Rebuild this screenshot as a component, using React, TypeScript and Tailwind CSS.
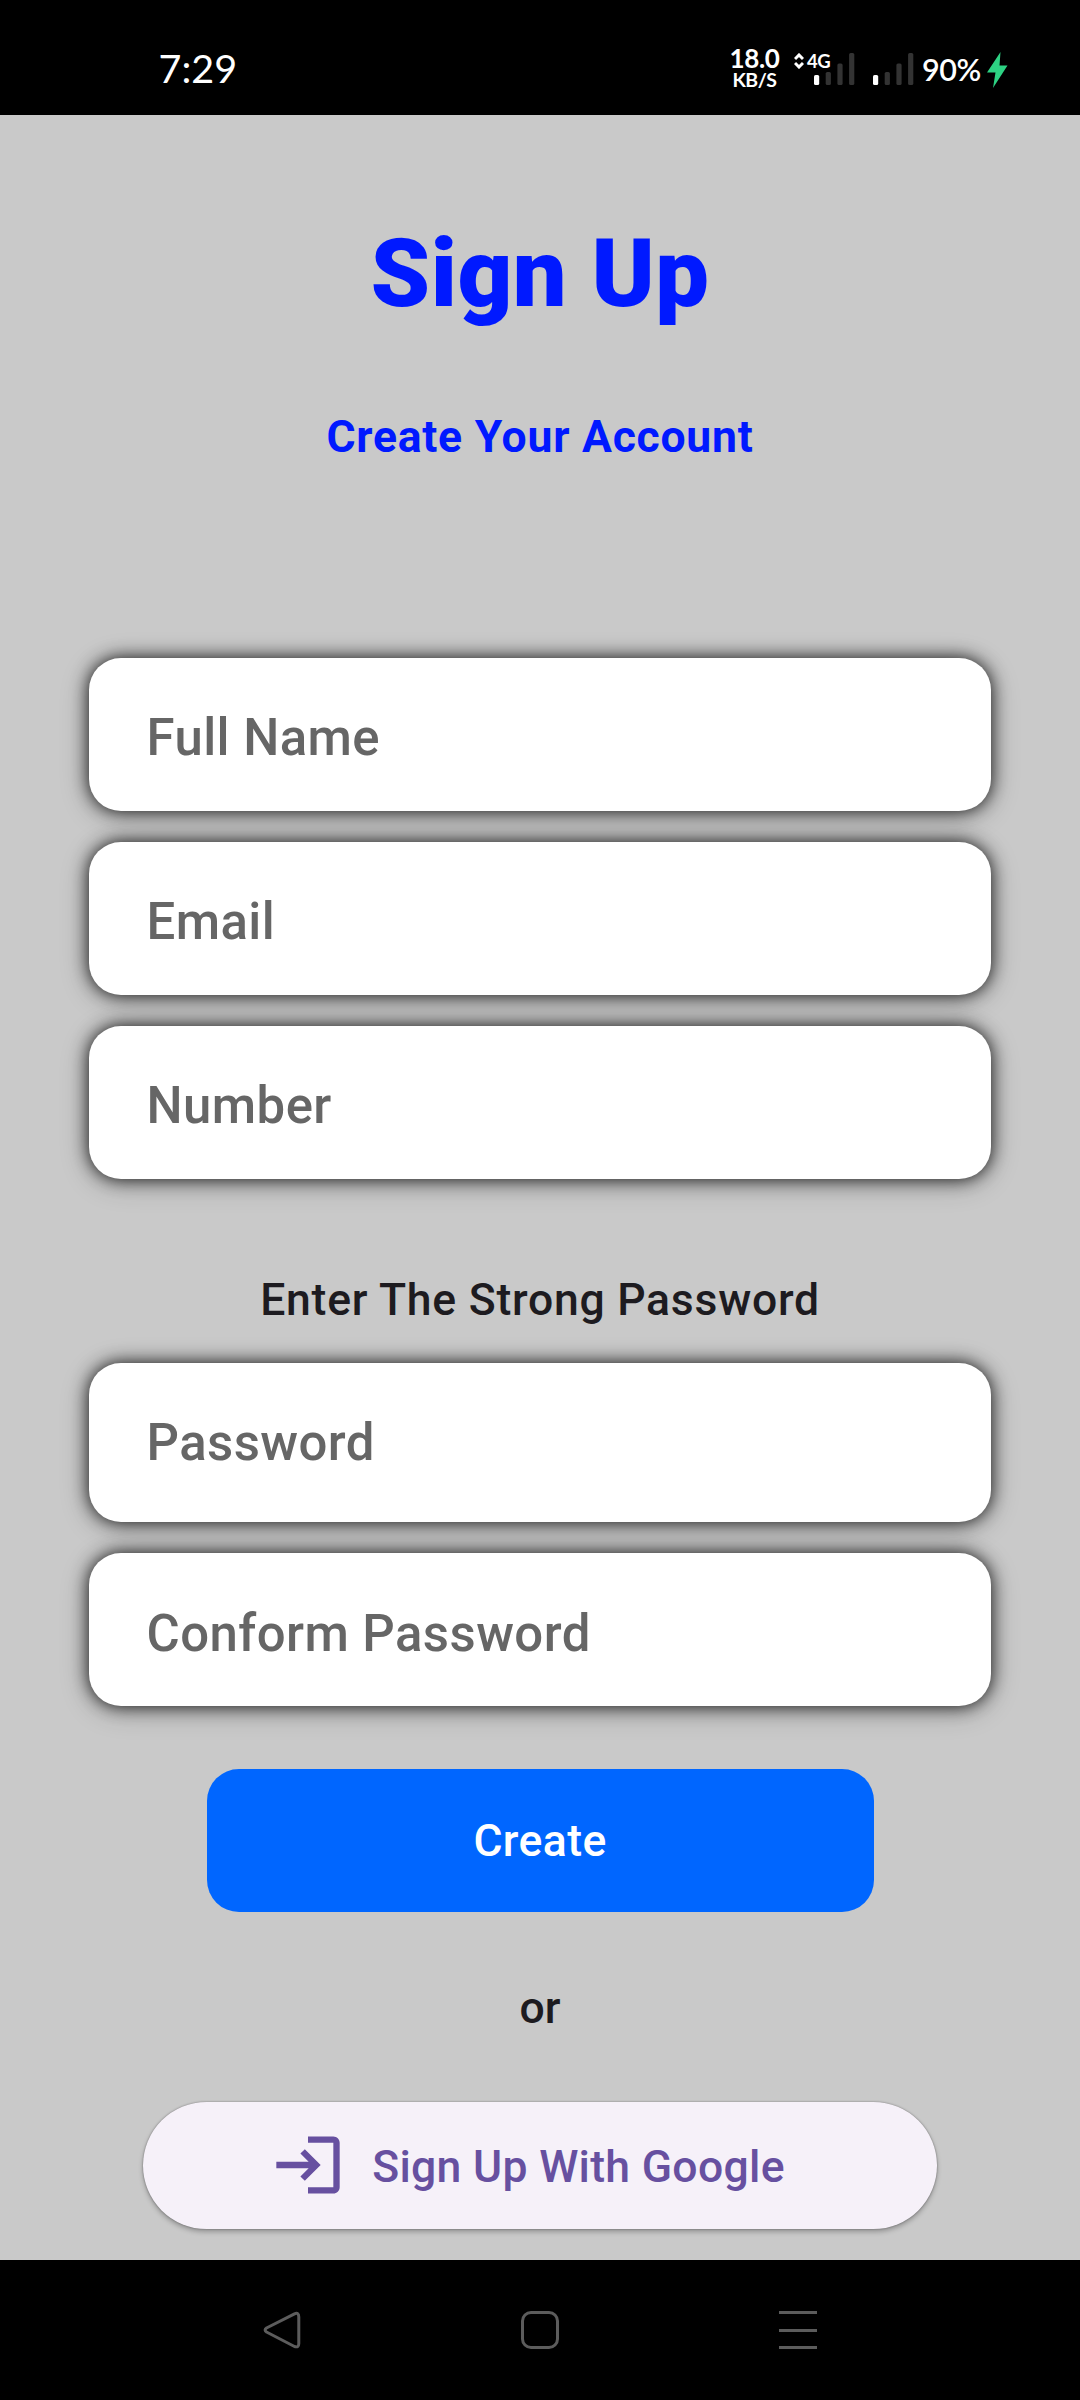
const BAR_TOPS = [22, 19, 10.5, 0];

function SignalBars() {
  return (
    <svg className="h-8 w-[41px]" viewBox="0 0 41 32">
      {BAR_TOPS.map((top, i) => (
        <rect key={top} x={i * 11.7} y={top} width="5.2" height={32 - top} rx="1.6" fill={i === 0 ? "#ffffff" : "#333333"} />
      ))}
    </svg>
  );
}

function StatusBar() {
  return (
    <header className="flex h-[115px] items-start bg-black font-['Lato'] text-white">
      <div className="ml-[158.5px] mt-[44px] w-[80px] text-[39.5px] leading-[48px]">7:29</div>
      <div className="ml-[485px] mt-[47px] flex w-[62px] flex-col items-center font-bold">
        <span className="text-[26px] leading-[23px] tracking-[-0.4px]">18.0</span>
        <span className="text-[19.5px] leading-[19px] tracking-[-0.5px]">KB/S</span>
      </div>
      <div className="relative ml-[28.5px] mt-[53px] h-8">
        <SignalBars />
        <div className="absolute -left-5 top-0 flex items-center gap-[3px]">
          <svg className="h-4 w-[10px]" viewBox="0 0 10 16" fill="none" stroke="#ffffff" strokeWidth="3">
            <path d="M1 6 5 2l4 4M1 10l4 4 4-4" />
          </svg>
          <span className="text-[18.5px] leading-4 font-bold tracking-[-0.6px]">4G</span>
        </div>
      </div>
      <div className="ml-[18px] mt-[53px] h-8">
        <SignalBars />
      </div>
      <div className="ml-[8px] mt-[52.5px] w-[64.5px] text-[30.5px] leading-8 font-semibold tracking-[-0.4px]">90%</div>
      <svg className="mt-[52px] h-9 w-[21px]" viewBox="0 0 21 36" fill="#2dd283">
        <path d="M13.5 0 0 20.5h8.500L6 36 20.500 13.500H12.500z" />
      </svg>
    </header>
  );
}

function Field({ label, tall = false }: { label: string; tall?: boolean }) {
  return (
    <div
      className={`flex w-[902px] shrink-0 items-center rounded-[32px] bg-white pl-[57.500px] shadow-[0_0_17px_rgba(0,0,0,0.88),0_4px_30px_rgba(0,0,0,0.24)] ${
        tall ? "h-[159px] pt-[2px]" : "h-[152.500px] pt-[8px]"
      }`}
    >
      <span className="text-[50.900px] leading-[76px] font-medium tracking-[0.450px] text-[#666666]">{label}</span>
    </div>
  );
}

function NavBar() {
  return (
    <nav className="flex h-[140px] items-center justify-center gap-[220px] bg-black text-[#5c5c5c]">
      <svg className="h-[38px] w-[38px]" viewBox="0 0 38 38" fill="none" stroke="currentColor" strokeWidth="3" strokeLinejoin="round">
        <path d="M31.500 2.800 3.500 17q-2.800 2 0 4l28 14.500q4.300 1.500 4.300-3V6q0-5-4.300-3.200z" />
      </svg>
      <div className="h-[38px] w-[38px] rounded-[10px] border-3 border-current" />
      <div className="flex h-[38px] w-[38px] flex-col justify-between">
        <span className="h-[3px] bg-current" />
        <span className="h-[3px] bg-current" />
        <span className="h-[3px] bg-current" />
      </div>
    </nav>
  );
}

export default function App() {
  return (
    <div className="flex h-[2400px] w-[1080px] flex-col overflow-hidden bg-black font-['Roboto']">
      <StatusBar />
      <main className="flex h-[2145px] flex-col items-center overflow-hidden bg-[#c9c9c9]">
        <h1 className="mt-[102.400px] text-[95.400px] leading-[112px] font-black tracking-[0.500px] text-[#0019ff]">Sign Up</h1>
        <h2 className="mt-[74.800px] text-[44.500px] leading-[66px] font-bold tracking-[0.750px] text-[#0019ff]">
          Create Your Account
        </h2>
        <div className="mt-[188px] flex flex-col gap-[31.500px]">
          <Field label="Full Name" />
          <Field label="Email" />
          <Field label="Number" />
        </div>
        <p className="mt-[88.300px] text-[44.500px] leading-[66px] font-medium tracking-[0.750px] text-[#1d1b20]">
          Enter The Strong Password
        </p>
        <div className="mt-[30px] flex flex-col gap-[31.500px]">
          <Field label="Password" tall />
          <Field label="Conform Password" />
        </div>
        <button className="mt-[63.500px] h-[143px] w-[667px] shrink-0 rounded-[32px] bg-[#0066ff] text-[44.500px] leading-[66px] font-medium tracking-[0.400px] text-white">
          Create
        </button>
        <p className="mt-[62.500px] text-[44.500px] leading-[66px] font-medium text-[#1d1b20]">or</p>
        <button className="mt-[61.500px] flex h-[127px] w-[794px] shrink-0 items-center justify-center gap-[26px] rounded-full bg-[#f6f1f9] pr-[25px] text-[#6750a0] shadow-[0_3px_5px_rgba(0,0,0,0.26),0_0_2px_rgba(0,0,0,0.4)]">
          <svg className="mb-[2px] h-[76px] w-[76px]" viewBox="0 0 24 24" fill="currentColor">
            <path d="M11 7 9.600 8.400l2.600 2.600H2v2h10.200l-2.600 2.600L11 17l5-5-5-5zm9 12h-8v2h8c1.100 0 2-.9 2-2V5c0-1.100-.9-2-2-2h-8v2h8v14z" />
          </svg>
          <span className="mt-[2px] text-[44.500px] leading-[66px] font-medium tracking-[0.300px]">Sign Up With Google</span>
        </button>
      </main>
      <NavBar />
    </div>
  );
}
